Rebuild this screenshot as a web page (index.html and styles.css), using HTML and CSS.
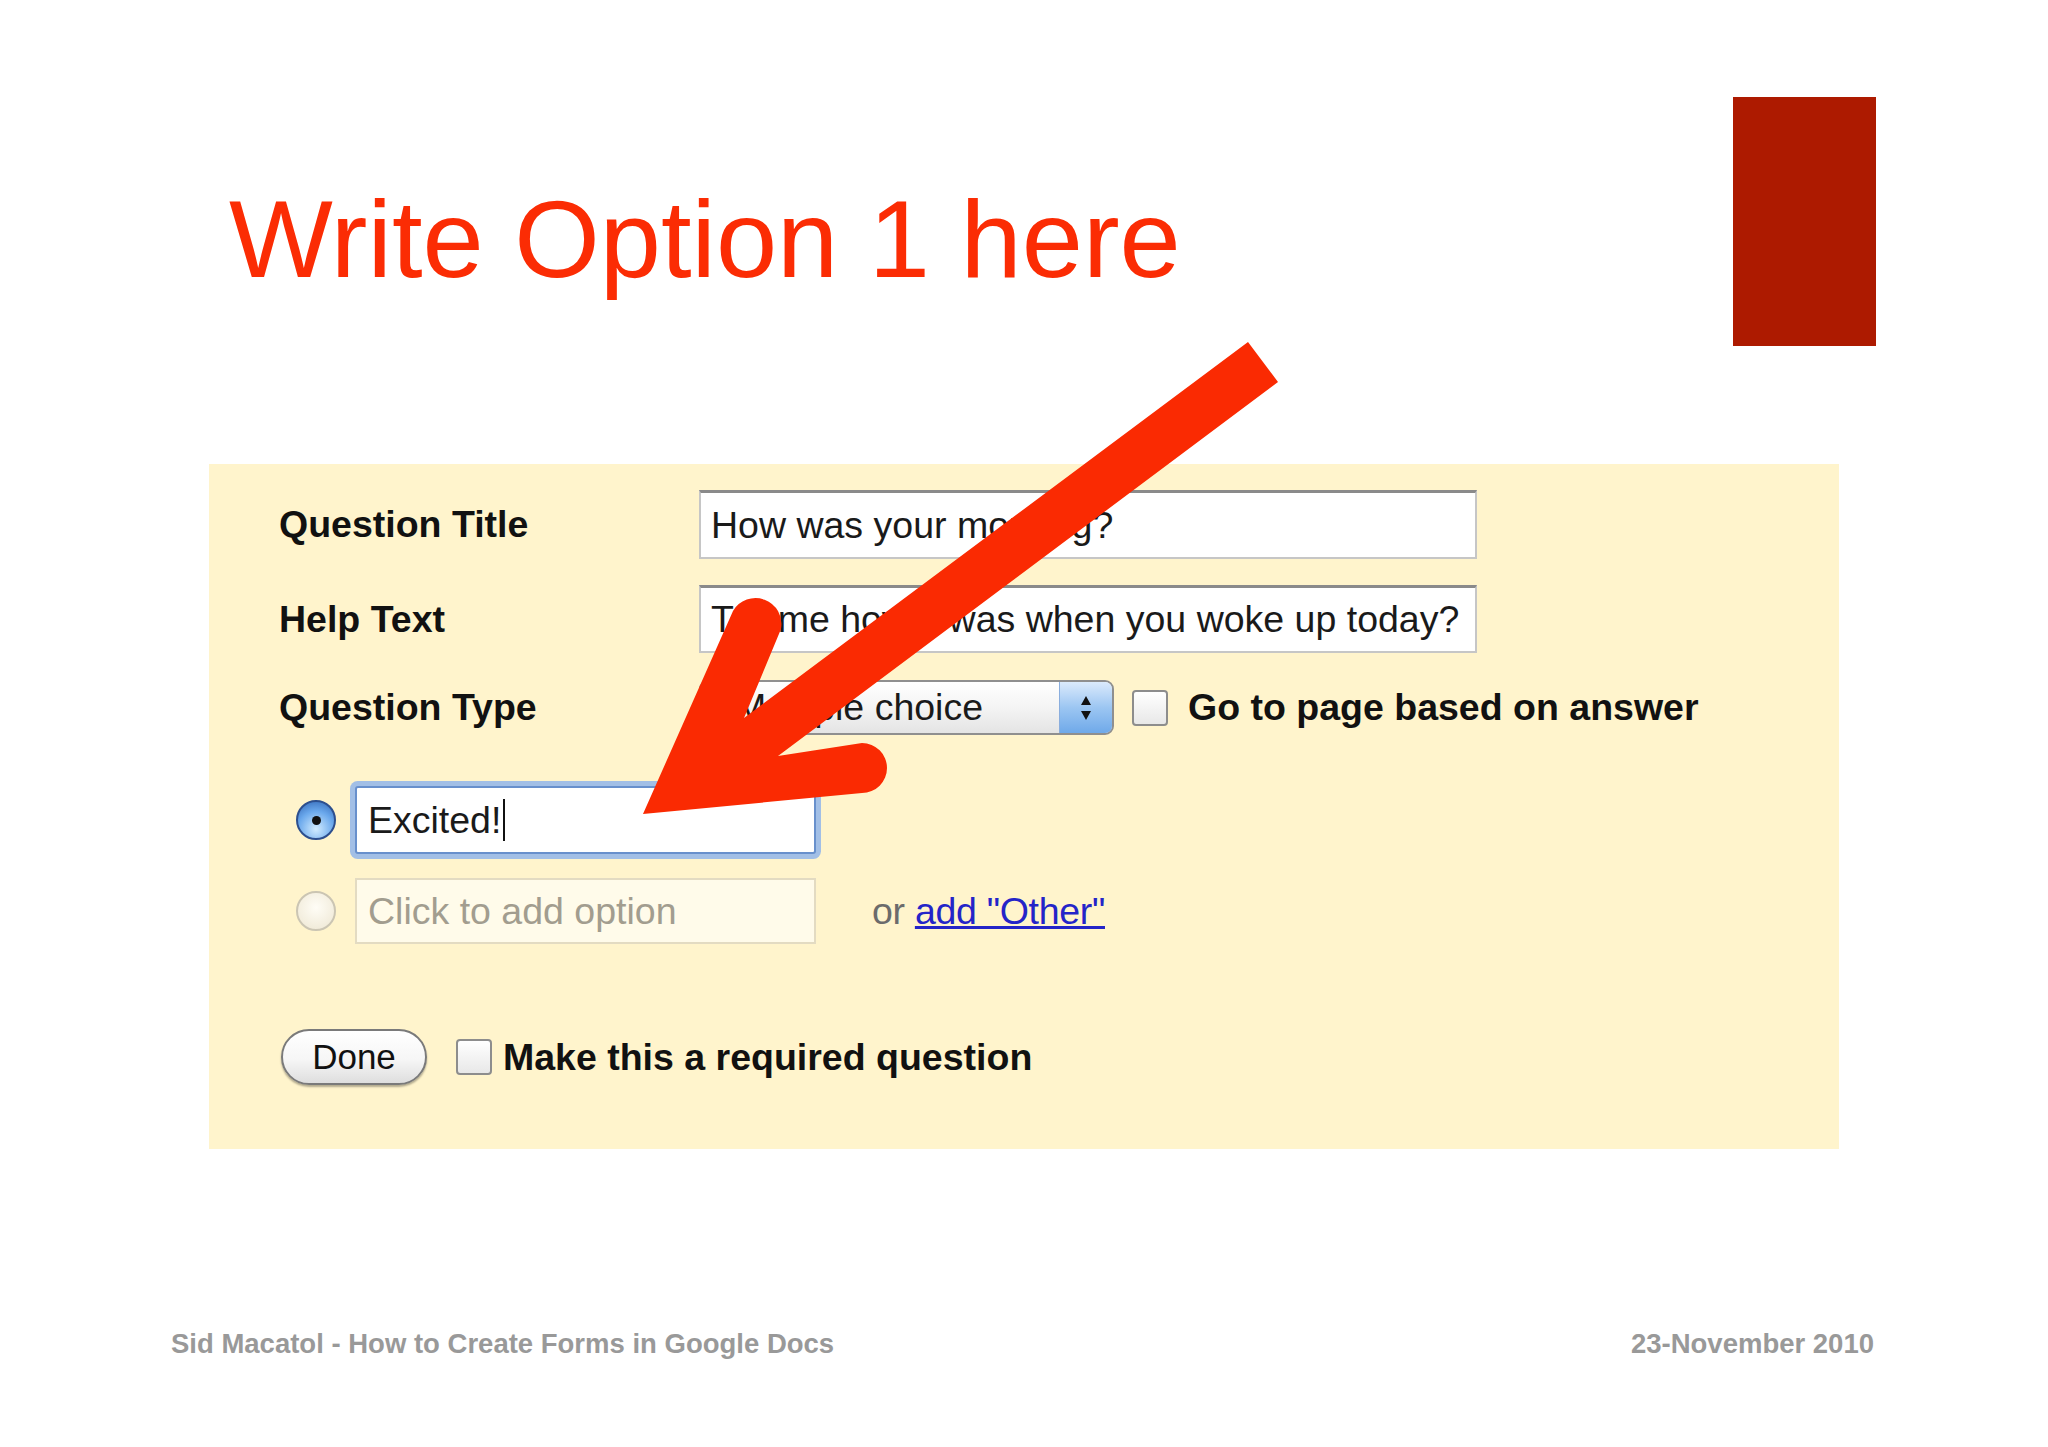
FILE: index.html
```html
<!DOCTYPE html>
<html lang="en">
<head>
    <meta charset="UTF-8">
    <title>Write Option 1 here</title>
    <link rel="stylesheet" href="styles.css">
</head>
<body>
<div class="slide">
    <header class="top">
        <h1 class="title">Write Option 1 here</h1>
        <div class="mark"></div>
    </header>

    <section class="panel">
        <div class="row">
            <div class="label">Question Title</div>
            <div class="field">How was your morning?</div>
        </div>
        <div class="row r2">
            <div class="label">Help Text</div>
            <div class="field short">Tell me how it was when you woke up today?</div>
        </div>
        <div class="row r3">
            <div class="label">Question Type</div>
            <div class="select">
                <span>Multiple choice</span>
                <span class="stepper">
                    <svg width="14" height="30" viewBox="0 0 14 30"><path d="M7 3 L12 12 L2 12 Z M2 18 L12 18 L7 27 Z" fill="#111"/></svg>
                </span>
            </div>
            <span class="check c-goto"></span>
            <span class="label-inline">Go to page based on answer</span>
        </div>

        <div class="row opt r4">
            <span class="radio on"></span>
            <div class="opt-field focus">Excited!<span class="caret"></span></div>
        </div>
        <div class="row opt r5">
            <span class="radio"></span>
            <div class="opt-field empty">Click to add option</div>
            <span class="other">or <a href="#">add "Other"</a></span>
        </div>

        <div class="row r6">
            <div class="done">Done</div>
            <span class="check c-req"></span>
            <span class="label-inline req">Make this a required question</span>
        </div>
    </section>

    <footer class="foot">
        <span>Sid Macatol - How to Create Forms in Google Docs</span>
        <span>23-November 2010</span>
    </footer>

    <!-- red arrow drawn over the form -->
    <svg class="arrow" viewBox="0 0 2048 1447">
        <path d="M643 814 L733 611 A26 26 0 0 1 781 629 L744 718 L1248 342 L1278 382 L778 756 L862 743 A25 25 0 0 1 862 793 Z" fill="#fa2a02"/>
    </svg>
</div>
</body>
</html>
```

FILE: styles.css
```css
body {
    margin: 0;
    background: #fff;
    font-family: "Liberation Sans", Arial, sans-serif;
}
.slide {
    position: relative;
    width: 2048px;
    height: 1447px;
    overflow: hidden;
}

/* title bar */
.top {
    display: flex;
    justify-content: space-between;
    align-items: flex-start;
    padding: 97px 172px 0 229px;
}
.title {
    margin: 87px 0 0;
    font-size: 110px;
    line-height: 110px;
    font-weight: normal;
    color: #fb2c04;
}
.mark {
    width: 143px;
    height: 249px;
    background: #ad1a00;
}

/* form panel */
.panel {
    margin: 118px 0 0 209px;
    width: 1630px;
    box-sizing: border-box;
    padding: 26px 0 64px 70px;
    background: #fff4cc;
    font-size: 37.5px;
    color: #1a1a1a;
}
.row {
    display: flex;
    align-items: center;
}
.r2 { margin-top: 26px; }
.r3 { margin-top: 27px; }
.r4 { margin-top: 51px; }
.r5 { margin-top: 24px; }
.r6 { margin-top: 85px; }

.label {
    width: 420px;
    font-weight: bold;
    color: #111;
}
.label-inline {
    font-weight: bold;
    color: #111;
    margin-left: 20px;
}
.field {
    width: 778px;
    height: 69px;
    box-sizing: border-box;
    padding-left: 10px;
    display: flex;
    align-items: center;
    background: #fff;
    border: 2px solid #c6c6c6;
    border-top: 3px solid #8a8a8a;
    white-space: nowrap;
}
.field.short { height: 68px; }

.select {
    width: 415px;
    height: 55px;
    box-sizing: border-box;
    display: flex;
    align-items: center;
    padding-left: 34px;
    border: 2px solid #8f8f8f;
    border-radius: 9px;
    background: linear-gradient(#fff, #f4f4f4 50%, #e4e4e4);
    overflow: hidden;
}
.stepper {
    margin-left: auto;
    width: 52px;
    height: 100%;
    display: flex;
    align-items: center;
    justify-content: center;
    border-left: 1px solid #8aaede;
    background: linear-gradient(#dbeafc, #9cc6f2 50%, #6fa9e9);
}
.check {
    width: 36px;
    height: 36px;
    box-sizing: border-box;
    border: 2px solid #8d8d8d;
    border-radius: 4px;
    background: linear-gradient(#fff, #e8e8e8);
}
.c-goto { margin-left: 18px; }

/* options */
.opt { margin-left: 17px; }
.radio {
    width: 40px;
    height: 40px;
    box-sizing: border-box;
    border-radius: 50%;
    border: 2px solid #cbc5b3;
    background: radial-gradient(circle at 50% 40%, #fffdf6, #ede6d2);
    position: relative;
}
.radio.on {
    border-color: #2d4f8e;
    background: radial-gradient(circle at 50% 75%, #d2ecff, #6aa8ec 55%, #2f64b4);
}
.radio.on::after {
    content: "";
    position: absolute;
    left: 14px;
    top: 14px;
    width: 9px;
    height: 9px;
    border-radius: 50%;
    background: #111;
}
.opt-field {
    margin-left: 19px;
    width: 461px;
    height: 68px;
    box-sizing: border-box;
    padding-left: 11px;
    display: flex;
    align-items: center;
}
.opt-field.focus {
    background: #fff;
    border: 2px solid #6890cc;
    box-shadow: 0 0 0 5px #a2bfe6;
    border-radius: 3px;
}
.opt-field.empty {
    height: 66px;
    background: #fffbea;
    border: 2px solid #e3dbc2;
    color: #a29d8f;
}
.caret {
    display: inline-block;
    width: 2px;
    height: 42px;
    margin-left: 2px;
    background: #111;
}
.other {
    margin-left: 56px;
    color: #6b6b6b;
    letter-spacing: -0.3px;
}
.other a {
    color: #2424c8;
    text-decoration: underline;
}

/* bottom row */
.done {
    margin-left: 2px;
    width: 146px;
    height: 56px;
    box-sizing: border-box;
    display: flex;
    align-items: center;
    justify-content: center;
    border: 2px solid #7a7a7a;
    border-radius: 28px;
    background: linear-gradient(#fff, #f6f6f6 55%, #dedede);
    box-shadow: 0 2px 2px rgba(0, 0, 0, 0.3);
    font-size: 35px;
    color: #111;
}
.c-req { margin-left: 29px; }
.req { margin-left: 11px; }

/* footer */
.foot {
    display: flex;
    justify-content: space-between;
    margin-top: 179px;
    padding: 0 174px 0 171px;
    font-size: 27.5px;
    line-height: 32px;
    font-weight: bold;
    color: #999;
}

.arrow {
    position: absolute;
    left: 0;
    top: 0;
    width: 2048px;
    height: 1447px;
    pointer-events: none;
}
```
